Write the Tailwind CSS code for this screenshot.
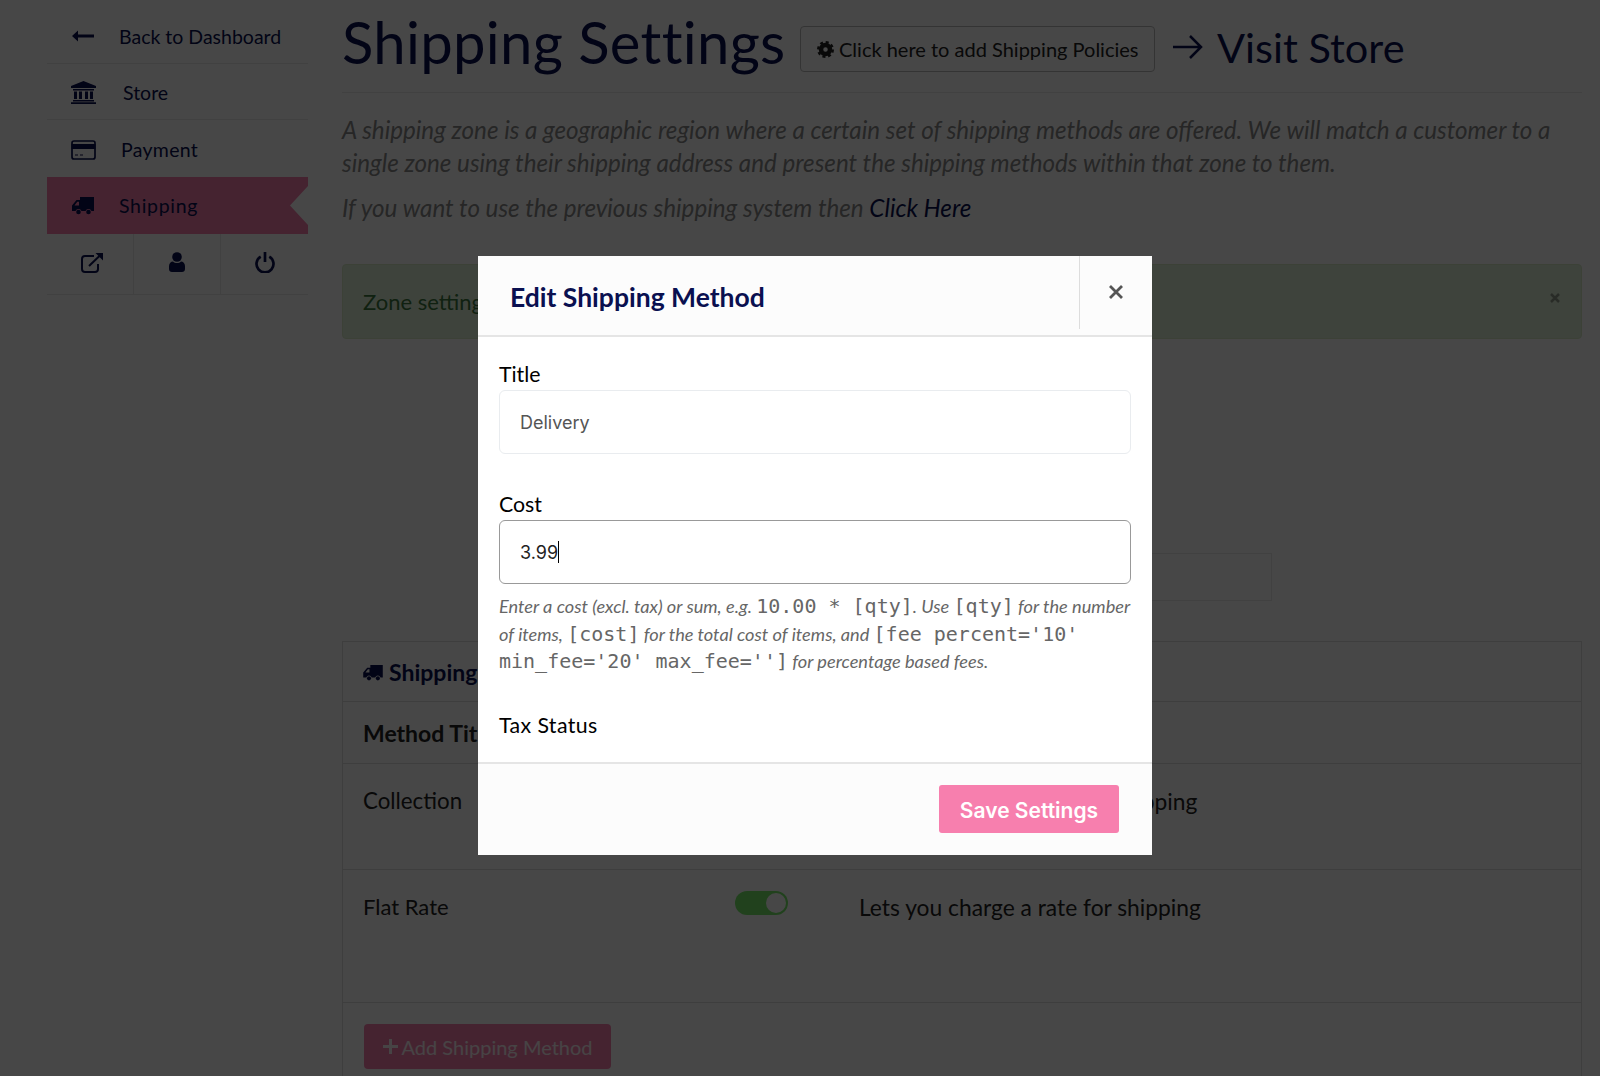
<!doctype html>
<html>
<head>
<meta charset="utf-8">
<script src="https://cdn.jsdelivr.net/npm/@tailwindcss/browser@4"></script>
</head>
<body class="relative h-[1076px] w-[1600px] overflow-hidden bg-white font-['Lato',sans-serif] text-[#222]">
<div class="flex h-full items-start">
  <aside class="ml-[47px] w-[261px] shrink-0 text-[19.500px] text-[#0a1050]">
    <div class="flex h-[64px] items-center border-b border-[#e8e8e8] pl-[25px] pt-[9px]">
      <svg class="h-[12px] w-[22px]" viewBox="0 0 22 12" fill="currentColor"><path d="M0 6 6 .5V4.500H22V7.500H6V11.500Z"/></svg>
      <span class="ml-[25px] mt-[2px]">Back to Dashboard</span>
    </div>
    <div class="flex h-[56px] items-center border-b border-[#e8e8e8] pl-[24px] pt-[2px]">
      <svg class="h-[23px] w-[25px]" viewBox="0 0 25 23" fill="currentColor"><path d="M12.500 0 25 5V7H0V5ZM2 8H23V9.500H2ZM3 10.500H6V18H3ZM8 10.500H11V18H8ZM14 10.500H17V18H14ZM19 10.500H22V18H19ZM2 19H23V20.500H2ZM0 21.300H25V23H0Z"/></svg>
      <span class="ml-[27px] mt-[1px]">Store</span>
    </div>
    <div class="flex h-[57px] items-center pl-[24px] pt-[2px]">
      <svg class="h-[20px] w-[25px]" viewBox="0 0 25 20" fill="none" stroke="currentColor"><rect x="1" y="1" width="23" height="18" rx="2" stroke-width="1.700"/><rect x="1" y="4.500" width="23" height="4" fill="currentColor"/><path d="M4 15H7M9 15H12" stroke-width="1.200"/></svg>
      <span class="ml-[25px] mt-[1px] tracking-[0.3px]">Payment</span>
    </div>
    <div class="flex h-[57px] items-center bg-[#f77fae] pl-[25px] [clip-path:polygon(0_0,100%_0,100%_9px,243px_50%,100%_48px,100%_100%,0_100%)]">
      <svg class="h-[18px] w-[22px]" viewBox="0 0 22 18" fill="currentColor"><path d="M8 0H22V14H19.500A3.200 3.200 0 0 0 13.500 14H9.500A3.200 3.200 0 0 0 3.500 14H0V8.500L4.500 3H8ZM2.500 8.500H7V4.800H5.300Z" fill-rule="evenodd"/><circle cx="6.500" cy="15" r="2.300"/><circle cx="16.500" cy="15" r="2.300"/></svg>
      <span class="ml-[25px] mt-[1px] tracking-[0.7px]">Shipping</span>
    </div>
    <div class="flex h-[61px] border-b border-[#e8e8e8]">
      <div class="flex w-[87px] items-center justify-center border-r border-[#e8e8e8]">
        <svg class="mb-[3px] ml-[5px] h-[21px] w-[23px]" viewBox="0 0 23 21" fill="none" stroke="currentColor" stroke-width="2"><path d="M13 4H4A3 3 0 0 0 1 7V17A3 3 0 0 0 4 20H14A3 3 0 0 0 17 17V12"/><path d="M8 14 20 2.500"/><path d="M14.500 1H22V8.500Z" fill="currentColor" stroke="none"/></svg>
      </div>
      <div class="flex w-[87px] items-center justify-center border-r border-[#e8e8e8]">
        <svg class="mb-[4px] h-[20px] w-[16px]" viewBox="0 0 16 20" fill="currentColor"><circle cx="8" cy="5" r="4.800"/><path d="M0 17V14C0 11.500 2 9.500 4 9.500 5 10.500 6.500 11 8 11S11 10.500 12 9.500C14 9.500 16 11.500 16 14V17C16 18.800 14.800 20 13 20H3C1.200 20 0 18.800 0 17Z"/></svg>
      </div>
      <div class="flex w-[87px] items-center justify-center">
        <svg class="mb-[4px] h-[21px] w-[20px]" viewBox="0 0 20 21" fill="none" stroke="currentColor" stroke-width="2.700"><path d="M5.700 4.600A8.500 8.500 0 1 0 14.300 4.600"/><path d="M10 0V10"/></svg>
      </div>
    </div>
  </aside>

  <main class="ml-[34px] w-[1240px] shrink-0">
    <header class="flex h-[93px] items-start border-b border-[#e8e8e8]">
      <h1 class="mt-[1px] w-[443px] shrink-0 whitespace-nowrap text-[58px] leading-[82px] tracking-[0.3px] text-[#0a1050]">Shipping Settings</h1>
      <a class="ml-[15px] mt-[26px] flex h-[46px] w-[355px] shrink-0 items-center whitespace-nowrap rounded-[4px] border border-[#bbb] pl-[16px] text-[20px]">
        <svg class="mr-[5px] h-[17px] w-[17px]" viewBox="0 0 17 17" fill="none" stroke="#222"><circle cx="8.500" cy="8.500" r="4.500" stroke-width="4.500"/><circle cx="8.500" cy="8.500" r="7.300" stroke-width="2.400" stroke-dasharray="3 2.730"/></svg>Click here to add Shipping Policies
      </a>
      <div class="ml-[18px] mt-[16px] flex items-center whitespace-nowrap text-[41.500px] leading-[62px] text-[#0a1050]">
        <svg class="h-[26px] w-[30px]" viewBox="0 0 30 26" fill="none" stroke="currentColor" stroke-width="2.500"><path d="M0 13H28M17 2 28 13 17 24"/></svg>
        <span class="ml-[14px]">Visit Store</span>
      </div>
    </header>
    <div class="mt-[20px] whitespace-nowrap text-[24.200px] italic leading-[33px] text-[#888]">
      <p>A shipping zone is a geographic region where a certain set of shipping methods are offered. We will match a customer to a<br>single zone using their shipping address and present the shipping methods within that zone to them.</p>
      <p class="mt-[12px]">If you want to use the previous shipping system then <a class="text-[#0a1050]">Click Here</a></p>
    </div>
    <div class="mt-[40px] flex h-[75px] items-center justify-between rounded-[4px] border border-[#d6e9c6] bg-[#dff0d8] pl-[20px] pr-[21px] text-[22px] text-[#3c763d]">
      <span class="mb-[1px]">Zone settings updated</span>
      <svg class="mb-[8px] h-[10px] w-[10px]" viewBox="0 0 10 10" stroke="#000" stroke-opacity=".35" stroke-width="2.500"><path d="M1 1 9 9M9 1 1 9"/></svg>
    </div>
    <div class="ml-[400px] mt-[214px] h-[48px] w-[530px] border border-[#e8e8e8]"></div>
    <section class="mt-[40px] border border-[#ddd] text-[22px]">
      <div class="flex h-[60px] items-center border-b border-[#ddd] pl-[20px] pt-[2px] text-[23px] font-bold text-[#0a1050]">
        <svg class="mr-[6px] h-[16px] w-[20px]" viewBox="0 0 22 18" fill="currentColor"><path d="M8 0H22V14H19.500A3.200 3.200 0 0 0 13.500 14H9.500A3.200 3.200 0 0 0 3.500 14H0V8.500L4.500 3H8ZM2.500 8.500H7V4.800H5.300Z" fill-rule="evenodd"/><circle cx="6.500" cy="15" r="2.300"/><circle cx="16.500" cy="15" r="2.300"/></svg>
        Shipping Methods
      </div>
      <div class="flex h-[62px] items-center border-b border-[#ddd] pl-[20px] pt-[2px] text-[23px] font-bold">
        <span class="w-[372px]">Method Title</span><span class="w-[123px]">Enabled</span><span>Description</span>
      </div>
      <div class="flex h-[106px] border-b border-[#ddd] pl-[20px] pt-[14px]">
        <span class="mt-[3px] w-[372px] text-[22.300px] leading-[40px]">Collection</span>
        <span class="mt-[10px] h-[24px] w-[53px] rounded-full bg-[#78ea6a] p-[2px]"><span class="block h-[20px] w-[20px] translate-x-[29px] rounded-full bg-white"></span></span>
        <span class="ml-[71px] mt-[3px] whitespace-nowrap text-[22.800px] leading-[40px]">Lets you collect items for shipping</span>
      </div>
      <div class="flex h-[133px] border-b border-[#ddd] pl-[20px] pt-[14px]">
        <span class="mt-[3px] w-[372px] leading-[40px]">Flat Rate</span>
        <span class="mt-[7px] h-[24px] w-[53px] rounded-full bg-[#78ea6a] p-[2px]"><span class="block h-[20px] w-[20px] translate-x-[29px] rounded-full bg-white"></span></span>
        <span class="ml-[71px] mt-[3px] whitespace-nowrap text-[22.800px] leading-[40px]">Lets you charge a rate for shipping</span>
      </div>
      <div class="h-[80px] pl-[21px] pt-[21px]">
        <a class="flex h-[45px] w-[247px] items-center justify-center rounded-[4px] bg-[#f77fae] text-[20px] text-white/90">
          <svg class="mr-[4px] h-[15px] w-[15px]" viewBox="0 0 15 15" fill="currentColor"><path d="M6 0H9V6H15V9H9V15H6V9H0V6H6Z"/></svg>Add Shipping Method
        </a>
      </div>
    </section>
  </main>
</div>

<div class="absolute inset-0 bg-black/72"></div>

<div class="absolute left-[478px] top-[256px] h-[599px] w-[674px] bg-white text-black">
  <div class="flex h-[81px] border-b-2 border-[#e5e5e5] bg-[#fcfcfc]">
    <h2 class="ml-[32px] mt-[23px] w-[569px] text-[26.500px] font-bold leading-[36px] text-[#0a1050]">Edit Shipping Method</h2>
    <div class="flex h-[73px] w-[73px] items-center justify-center border-l border-[#ddd]">
      <svg class="mb-[2px] h-[14px] w-[14px]" viewBox="0 0 14 14" stroke="#555" stroke-width="2.800"><path d="M1 1 13 13M13 1 1 13"/></svg>
    </div>
  </div>
  <div class="h-[425px] px-[21px] pt-[21px]">
    <label class="block text-[21.300px] leading-[32px]">Title</label>
    <div class="flex h-[64px] items-center rounded-[6px] border border-[#e9ecef] pl-[20px] font-['Inter',sans-serif] text-[18px] text-[#555]">Delivery</div>
    <label class="mt-[34px] block text-[21.300px] leading-[32px]">Cost</label>
    <div class="flex h-[64px] items-center rounded-[6px] border border-[#999] pl-[20px] font-['Inter',sans-serif] text-[18px] text-[#222]">3.99<span class="h-[22px] w-px bg-black"></span></div>
    <p class="mt-[9px] whitespace-nowrap text-[18.200px] italic leading-[27.500px] text-[#666]">Enter a cost (excl. tax) or sum, e.g. <code class="font-['DejaVu_Sans_Mono',monospace] text-[20px] not-italic">10.00 * [qty]</code>. Use <code class="font-['DejaVu_Sans_Mono',monospace] text-[20px] not-italic">[qty]</code> for the number<br>of items, <code class="font-['DejaVu_Sans_Mono',monospace] text-[20px] not-italic">[cost]</code> for the total cost of items, and <code class="font-['DejaVu_Sans_Mono',monospace] text-[20px] not-italic">[fee percent='10'</code><br><code class="font-['DejaVu_Sans_Mono',monospace] text-[20px] not-italic">min_fee='20' max_fee='']</code> for percentage based fees.</p>
    <label class="mt-[33px] block text-[21.300px] leading-[32px] tracking-[0.4px]">Tax Status</label>
  </div>
  <div class="flex h-[93px] justify-end border-t-2 border-[#e5e5e5] bg-[#fcfcfc] pr-[33px] pt-[21px]">
    <button class="h-[48px] w-[180px] rounded-[3px] bg-[#f77fae] pt-[3px] font-['Inter',sans-serif] text-[21px] font-semibold text-white">Save Settings</button>
  </div>
</div>
</body>
</html>
